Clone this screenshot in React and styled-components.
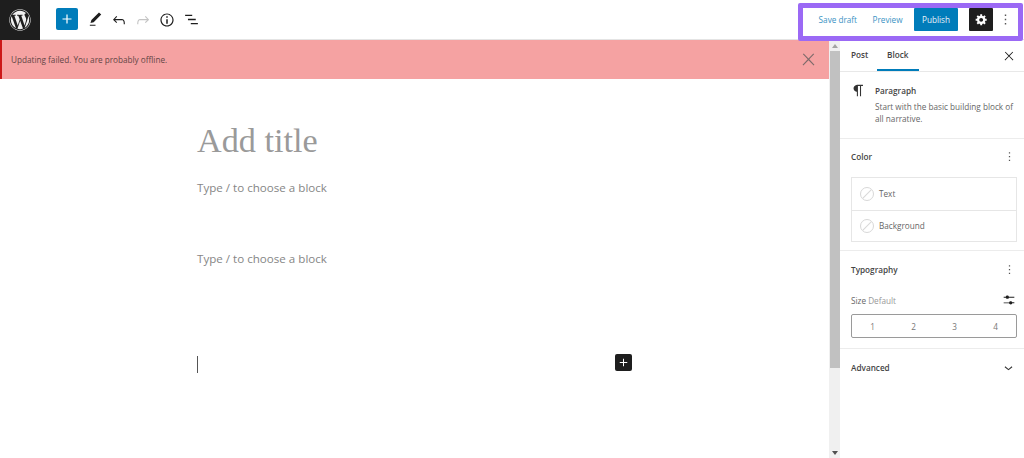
import React from 'react'
import styled, { createGlobalStyle } from 'styled-components'
import { FaWordpress } from 'react-icons/fa'

const Global = createGlobalStyle`
    html, body {
        margin: 0;
        padding: 0;
        background: #fff;
    }
    * {
        box-sizing: border-box;
    }
`

const icons = {
    plus: 'M18 11.2h-5.2V6h-1.6v5.2H6v1.6h5.2V18h1.6v-5.2H18z',
    pencil: 'M20.1 5.1L16.9 2 6.2 12.7l-1.3 4.4 4.5-1.3L20.1 5.1zM4 20.8h8v-1.5H4v1.5z',
    undo: 'M18.3 11.7c-.6-.6-1.4-.9-2.3-.9H6.7l2.9-3.3-1.1-1-4.5 5L8.5 16l1-1-2.7-2.7H16c.5 0 .9.2 1.3.5 1 1 1 3.4 1 4.5v.3h1.5v-.2c0-1.5 0-4.3-1.5-5.7z',
    redo: 'M15.6 6.5l-1.1 1 2.9 3.3H8c-.9 0-1.7.3-2.3.9-1.4 1.5-1.4 4.2-1.4 5.6v.2h1.5v-.3c0-1.1 0-3.5 1-4.5.3-.3.7-.5 1.3-.5h9.2L14.5 15l1.1 1.1 4.6-4.6-4.6-5z',
    info: 'M12 3.2c-4.8 0-8.8 3.9-8.8 8.8 0 4.8 3.9 8.8 8.8 8.8 4.8 0 8.8-3.9 8.8-8.8 0-4.8-4-8.8-8.8-8.8zm0 16c-4 0-7.2-3.3-7.2-7.2C4.8 8 8 4.8 12 4.8s7.2 3.3 7.2 7.2c0 4-3.2 7.2-7.2 7.2zM11 17h2v-6h-2v6zm0-8h2V7h-2v2z',
    list: 'M3 5.2h10v1.8H3zM7 11.1h11v1.8H7zM11 17h10v1.8H11z',
    close: 'M13 11.8l6.1-6.3-1-1-6.1 6.2-6.1-6.2-1 1 6.1 6.3-6.5 6.7 1 1 6.5-6.6 6.5 6.6 1-1z',
    paragraph: 'M18.3 4H9.9v-.1l-.9.2c-2.3.4-4 2.4-4 4.8s1.7 4.4 4 4.8l.7.1V20h1.5V5.5h2.9V20h1.5V5.5h2.7V4z',
    chevron: 'M17.5 11.6L12 16l-5.5-4.4.9-1.2L12 14l4.5-3.6 1 1.2z',
    sliders: 'M14.5 13.8c-1.1 0-2.1.7-2.4 1.8H4V17h8.1c.3 1 1.3 1.8 2.4 1.8s2.1-.7 2.4-1.8H20v-1.5h-3.1c-.3-1-1.3-1.7-2.4-1.7zM11.9 7c-.3-1-1.3-1.8-2.4-1.8S7.4 6 7.1 7H4v1.5h3.1c.3 1 1.3 1.8 2.4 1.8s2.1-.7 2.4-1.8H20V7h-8.1z',
    more: 'M13 19h-2v-2h2v2zm0-6h-2v-2h2v2zm0-6h-2V5h2v2z',
}

const gearPath = 'M18 12h-2.18c-.17.7-.44 1.35-.81 1.93l1.54 1.54-2.1 2.1-1.54-1.54c-.58.36-1.23.63-1.91.79V19H8v-2.18c-.68-.16-1.33-.43-1.91-.79l-1.54 1.54-2.12-2.12 1.54-1.54c-.36-.58-.63-1.23-.79-1.91H1V9.03h2.17c.16-.7.44-1.35.8-1.94L2.43 5.55l2.1-2.1 1.54 1.54c.58-.37 1.24-.64 1.93-.81V2h3v2.18c.68.16 1.33.43 1.91.79l1.54-1.54 2.12 2.12-1.54 1.54c.36.59.64 1.24.8 1.94H18V12zm-8.5 1.5c1.66 0 3-1.34 3-3s-1.34-3-3-3-3 1.34-3 3 1.34 3 3 3z'

const Icon = ({ name, size = 16, color = '#1e1e1e' }) => (
    <svg width={size} height={size} viewBox="0 0 24 24" fill={color}>
        <path d={icons[name]} />
    </svg>
)

const App = () => (
    <Page>
        <Global />
        <TopBar>
            <Logo><FaWordpress size={22} color="#f0f0f0" /></Logo>
            <AddButton><Icon name="plus" size={18} color="#fff" /></AddButton>
            <Tools>
                <ToolButton><Icon name="pencil" size={17} /></ToolButton>
                <ToolButton><Icon name="undo" size={18} /></ToolButton>
                <ToolButton><Icon name="redo" size={18} color="#c4c4c4" /></ToolButton>
                <ToolButton><Icon name="info" size={18} /></ToolButton>
                <ToolButton><Icon name="list" size={17} /></ToolButton>
            </Tools>
            <Actions>
                <LinkButton>Save draft</LinkButton>
                <LinkButton>Preview</LinkButton>
                <PublishButton>Publish</PublishButton>
                <GearButton>
                    <svg width="13" height="13" viewBox="0 0 20 20" fill="#fff"><path d={gearPath} /></svg>
                </GearButton>
                <MoreButton><Icon name="more" size={17} color="#555" /></MoreButton>
            </Actions>
        </TopBar>
        <Highlight />
        <Main>
            <Editor>
                <Notice>
                    <span>Updating failed. You are probably offline.</span>
                    <Icon name="close" size={19} color="#7d6a6a" />
                </Notice>
                <Canvas>
                    <TitleText>Add title</TitleText>
                    <Placeholder>Type / to choose a block</Placeholder>
                    <Placeholder $top={51}>Type / to choose a block</Placeholder>
                    <CaretRow>
                        <Caret />
                        <BlockAdd><Icon name="plus" size={15} color="#fff" /></BlockAdd>
                    </CaretRow>
                </Canvas>
            </Editor>
            <Scrollbar>
                <ScrollArrow />
                <ScrollThumb />
                <ScrollArrow $down />
            </Scrollbar>
            <Sidebar>
                <Tabs>
                    <Tab>Post</Tab>
                    <Tab $active>Block</Tab>
                    <TabClose><Icon name="close" size={14} color="#1e1e1e" /></TabClose>
                </Tabs>
                <BlockCard>
                    <Icon name="paragraph" size={17} color="#333" />
                    <div>
                        <BlockName>Paragraph</BlockName>
                        <BlockText>Start with the basic building block of all narrative.</BlockText>
                    </div>
                </BlockCard>
                <Panel $height={112}>
                    <PanelHead>
                        <PanelTitle>Color</PanelTitle>
                        <Icon name="more" size={15} color="#555" />
                    </PanelHead>
                    <ColorList>
                        <ColorRow><Swatch /><span>Text</span></ColorRow>
                        <ColorRow><Swatch /><span>Background</span></ColorRow>
                    </ColorList>
                </Panel>
                <Panel $height={98} $inset>
                    <PanelHead>
                        <PanelTitle>Typography</PanelTitle>
                        <Icon name="more" size={15} color="#555" />
                    </PanelHead>
                    <SizeRow>
                        <SizeLabel>Size <em>Default</em></SizeLabel>
                        <Icon name="sliders" size={16} color="#1e1e1e" />
                    </SizeRow>
                    <Segments>
                        <span>1</span>
                        <span>2</span>
                        <span>3</span>
                        <span>4</span>
                    </Segments>
                </Panel>
                <AdvancedRow>
                    <PanelTitle>Advanced</PanelTitle>
                    <Icon name="chevron" size={17} color="#333" />
                </AdvancedRow>
            </Sidebar>
        </Main>
    </Page>
)

const Page = styled.div`
    position: relative;
    width: 1024px;
    height: 458px;
    overflow: hidden;
    display: flex;
    flex-direction: column;
    background: #fff;
    font-family: "Open Sans", "Noto Sans", sans-serif;
    color: #1e1e1e;
`
const TopBar = styled.header`
    flex: none;
    height: 40px;
    display: flex;
    align-items: center;
    border-bottom: 1px solid #e4e4e4;
`
const Logo = styled.div`
    width: 40px;
    height: 40px;
    margin-top: 1px;
    display: flex;
    align-items: center;
    justify-content: center;
    background: #1e1e1e;
`
const AddButton = styled.div`
    width: 22px;
    height: 22px;
    margin-left: 16px;
    margin-top: -1px;
    display: flex;
    align-items: center;
    justify-content: center;
    background: #007cba;
    border-radius: 2px;
`
const Tools = styled.div`
    display: flex;
    align-items: center;
    margin-left: 5px;
`
const ToolButton = styled.div`
    width: 24px;
    height: 24px;
    display: flex;
    align-items: center;
    justify-content: center;
`
const Actions = styled.div`
    margin-left: auto;
    display: flex;
    align-items: center;
    padding-right: 7px;
`
const LinkButton = styled.div`
    font-size: 8.2px;
    color: #3a93c4;
    margin-right: 15.5px;
`
const PublishButton = styled.div`
    width: 44px;
    height: 23px;
    margin-left: -4px;
    display: flex;
    align-items: center;
    justify-content: center;
    background: #007cba;
    color: #e8f3f9;
    font-size: 8.2px;
    border-radius: 1px;
`
const GearButton = styled.div`
    width: 24px;
    height: 23px;
    margin-left: 11px;
    display: flex;
    align-items: center;
    justify-content: center;
    background: #1e1e1e;
    border-radius: 1px;
`
const MoreButton = styled.div`
    width: 24px;
    display: flex;
    justify-content: center;
`
const Highlight = styled.div`
    position: absolute;
    left: 798px;
    top: 3px;
    width: 225px;
    height: 38px;
    border: 5px solid #9b69f5;
    border-radius: 2px;
    pointer-events: none;
`
const Main = styled.div`
    flex: 1;
    display: flex;
    min-height: 0;
`
const Editor = styled.main`
    width: 829px;
    flex: none;
    display: flex;
    flex-direction: column;
`
const Notice = styled.div`
    height: 39px;
    display: flex;
    align-items: center;
    justify-content: space-between;
    padding: 0 11px 0 9px;
    background: #f5a2a2;
    border-left: 2px solid #cc1818;
    font-size: 8.2px;
    color: #634646;
`
const Canvas = styled.div`
    flex: 1;
    padding-left: 197px;
    padding-top: 39px;
`
const TitleText = styled.h1`
    margin: 0;
    font-family: "Liberation Serif", serif;
    font-size: 34.2px;
    font-weight: 400;
    line-height: 46px;
    color: #9a9a9a;
`
const Placeholder = styled.p`
    margin: ${props => props.$top || 0}px 0 0;
    padding-top: ${props => (props.$top ? 0 : 14)}px;
    font-size: 11.6px;
    line-height: 20px;
    color: #868686;
`
const CaretRow = styled.div`
    width: 435px;
    margin-top: 85px;
    display: flex;
    align-items: flex-start;
    justify-content: space-between;
`
const Caret = styled.div`
    width: 1px;
    height: 17px;
    margin-top: 2px;
    background: #555;
`
const BlockAdd = styled.div`
    width: 17px;
    height: 17px;
    display: flex;
    align-items: center;
    justify-content: center;
    background: #1e1e1e;
    border-radius: 2px;
`
const Scrollbar = styled.div`
    width: 11px;
    flex: none;
    display: flex;
    flex-direction: column;
    align-items: center;
    background: #f0f0f0;
`
const ScrollArrow = styled.div`
    flex: none;
    width: 0;
    height: 0;
    margin: ${props => (props.$down ? 'auto 0 3px' : '4px 0 3px')};
    border-left: 3px solid transparent;
    border-right: 3px solid transparent;
    border-bottom: ${props => (props.$down ? '0' : '4px solid #a3a3a3')};
    border-top: ${props => (props.$down ? '4px solid #505050' : '0')};
`
const ScrollThumb = styled.div`
    flex: none;
    width: 10px;
    height: 317px;
    background: #c1c1c1;
`
const Sidebar = styled.aside`
    flex: 1;
    display: flex;
    flex-direction: column;
    font-size: 8.2px;
`
const Tabs = styled.div`
    flex: none;
    height: 32px;
    display: flex;
    align-items: stretch;
    padding-left: 1px;
    border-bottom: 1px solid #e8e8e8;
`
const Tab = styled.div`
    width: ${props => (props.$active ? '42px' : '36px')};
    padding-left: 10px;
    display: flex;
    align-items: center;
    font-size: 8.2px;
    font-weight: 600;
    color: #444;
    border-bottom: 2px solid ${props => (props.$active ? '#007cba' : 'transparent')};
`
const TabClose = styled.div`
    margin-left: auto;
    padding-right: 8px;
    display: flex;
    align-items: center;
`
const BlockCard = styled.div`
    flex: none;
    height: 67px;
    display: flex;
    gap: 8px;
    padding: 10px 4px 0 10px;
    border-bottom: 1px solid #ececec;
    svg {
        flex: none;
    }
`
const BlockName = styled.div`
    font-size: 8.2px;
    font-weight: 600;
    line-height: 18px;
    color: #444;
`
const BlockText = styled.div`
    margin-top: 1px;
    font-size: 8.2px;
    line-height: 12px;
    color: #666;
`
const Panel = styled.section`
    flex: none;
    height: ${props => props.$height}px;
    padding: ${props => (props.$inset ? '1px' : '0')} 7px 0 11px;
    border-bottom: 1px solid #ececec;
`
const PanelHead = styled.div`
    height: 34px;
    display: flex;
    align-items: center;
    justify-content: space-between;
`
const PanelTitle = styled.div`
    font-size: 8.2px;
    font-weight: 600;
    color: #444;
`
const ColorList = styled.div`
    width: 166px;
    margin-top: 4px;
    border: 1px solid #e6e6e6;
`
const ColorRow = styled.div`
    height: 31.5px;
    display: flex;
    align-items: center;
    gap: 5px;
    padding-left: 8px;
    font-size: 8.2px;
    color: #666;
    & + & {
        border-top: 1px solid #e6e6e6;
    }
`
const Swatch = styled.div`
    position: relative;
    width: 14px;
    height: 14px;
    border-radius: 50%;
    border: 1px solid #d8d8d8;
    overflow: hidden;
    &::after {
        content: '';
        position: absolute;
        left: -1px;
        top: 5px;
        width: 15px;
        height: 1px;
        background: #d8d8d8;
        transform: rotate(-45deg);
    }
`
const SizeRow = styled.div`
    height: 26px;
    margin-top: 1px;
    display: flex;
    align-items: center;
    justify-content: space-between;
`
const SizeLabel = styled.div`
    font-size: 8.2px;
    color: #666;
    em {
        font-style: normal;
        color: #999;
    }
`
const Segments = styled.div`
    width: 166px;
    height: 24px;
    margin-top: 1px;
    display: grid;
    grid-template-columns: repeat(4, 1fr);
    align-items: center;
    justify-items: center;
    border: 1px solid #9a9a9a;
    border-radius: 2px;
    font-size: 8.2px;
    color: #777;
`
const AdvancedRow = styled.div`
    flex: none;
    height: 36px;
    padding: 0 7px 0 11px;
    display: flex;
    align-items: center;
    justify-content: space-between;
`
export default App
